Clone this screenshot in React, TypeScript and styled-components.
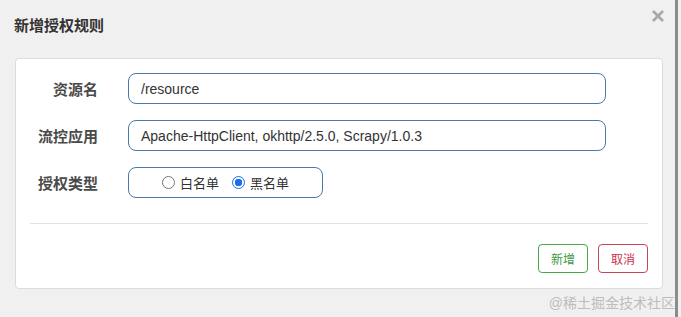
import React, { useState } from 'react';
import styled, { createGlobalStyle } from 'styled-components';

const GlobalStyle = createGlobalStyle`
  html, body {
    margin: 0;
    padding: 0;
    background: #f0f0f0;
    font-family: "Liberation Sans", "Noto Sans CJK SC", sans-serif;
  }
`;

const Modal = styled.div`
  position: relative;
  width: 678px;
  height: 317px;
  box-sizing: border-box;
  background: #f0f0f0;
  border-right: 3px solid #8c8c8c;
`;

const Header = styled.div`
  height: 58px;
  display: flex;
  align-items: center;
  justify-content: space-between;
  padding: 0 10px 0 14px;
  box-sizing: border-box;
`;

const Title = styled.h3`
  margin: 0;
  margin-top: -10px;
  font-size: 15px;
  font-weight: bold;
  color: #333;
`;

const CloseButton = styled.button`
  border: none;
  background: transparent;
  padding: 0;
  margin-top: -26px;
  width: 14px;
  height: 14px;
  cursor: pointer;
  display: flex;
`;

const Panel = styled.div`
  margin: 0 15px;
  width: 648px;
  box-sizing: border-box;
  background: #fff;
  border: 1px solid #dcdcdc;
  border-radius: 4px;
  padding: 14px 14px 15px;
`;

const Form = styled.div`
  display: flex;
  flex-direction: column;
  gap: 16px;
`;

const Row = styled.div`
  display: flex;
  align-items: center;
  gap: 30px;
`;

const Label = styled.label`
  width: 68px;
  text-align: right;
  font-size: 15px;
  font-weight: bold;
  color: #4a4a4a;
`;

const Input = styled.input`
  width: 478px;
  height: 31px;
  box-sizing: border-box;
  border: 1px solid #4a78a8;
  border-radius: 8px;
  padding: 0 12px;
  font-family: "Liberation Sans", "Noto Sans CJK SC", sans-serif;
  font-size: 14px;
  color: #333;
  outline: none;
`;

const RadioBox = styled.div`
  width: 195px;
  height: 31px;
  box-sizing: border-box;
  border: 1px solid #4a78a8;
  border-radius: 8px;
  display: flex;
  align-items: center;
  justify-content: center;
  gap: 13px;
`;

const RadioLabel = styled.label`
  display: flex;
  align-items: center;
  gap: 5px;
  font-size: 13px;
  color: #333;
  cursor: pointer;
`;

const Radio = styled.input`
  appearance: none;
  margin: 0;
  width: 13px;
  height: 13px;
  border-radius: 50%;
  border: 1px solid #777;
  background: #fff;
  box-sizing: border-box;

  &:checked {
    border: 1px solid #1a6fe8;
    background: radial-gradient(circle, #1a6fe8 0 3.5px, #fff 4px 100%);
  }
`;

const Divider = styled.hr`
  margin: 25px 0 20px;
  border: none;
  border-top: 1px solid #e2e2e2;
`;

const Footer = styled.div`
  display: flex;
  justify-content: flex-end;
  gap: 10px;
`;

const Button = styled.button<{ $tone: 'green' | 'red' }>`
  width: 50px;
  height: 29px;
  background: #fff;
  border: 1px solid ${(p) => (p.$tone === 'green' ? '#4aa64a' : '#c9435a')};
  color: ${(p) => (p.$tone === 'green' ? '#3e9a3e' : '#c9304c')};
  border-radius: 4px;
  font-family: "Liberation Sans", "Noto Sans CJK SC", sans-serif;
  font-size: 12px;
  cursor: pointer;
`;

const Watermark = styled.div`
  position: absolute;
  right: 0;
  bottom: 5px;
  font-size: 14px;
  color: #bdbdbd;
`;

const App: React.FC = () => {
  const [resource, setResource] = useState('/resource');
  const [apps, setApps] = useState('Apache-HttpClient, okhttp/2.5.0, Scrapy/1.0.3');
  const [strategy, setStrategy] = useState('black');

  return (
    <>
      <GlobalStyle />
      <Modal>
        <Header>
          <Title>新增授权规则</Title>
          <CloseButton aria-label="close">
            <svg width="14" height="14" viewBox="0 0 14 14">
              <path d="M2 2 L12 12 M12 2 L2 12" stroke="#a8a8a8" strokeWidth="2.6" strokeLinecap="butt" />
            </svg>
          </CloseButton>
        </Header>
        <Panel>
          <Form>
            <Row>
              <Label htmlFor="resource">资源名</Label>
              <Input id="resource" value={resource} onChange={(e) => setResource(e.target.value)} />
            </Row>
            <Row>
              <Label htmlFor="apps">流控应用</Label>
              <Input id="apps" value={apps} onChange={(e) => setApps(e.target.value)} />
            </Row>
            <Row>
              <Label>授权类型</Label>
              <RadioBox>
                <RadioLabel>
                  <Radio
                    type="radio"
                    name="strategy"
                    checked={strategy === 'white'}
                    onChange={() => setStrategy('white')}
                  />
                  白名单
                </RadioLabel>
                <RadioLabel>
                  <Radio
                    type="radio"
                    name="strategy"
                    checked={strategy === 'black'}
                    onChange={() => setStrategy('black')}
                  />
                  黑名单
                </RadioLabel>
              </RadioBox>
            </Row>
          </Form>
          <Divider />
          <Footer>
            <Button $tone="green">新增</Button>
            <Button $tone="red">取消</Button>
          </Footer>
        </Panel>
        <Watermark>@稀土掘金技术社区</Watermark>
      </Modal>
    </>
  );
};

export default App;
